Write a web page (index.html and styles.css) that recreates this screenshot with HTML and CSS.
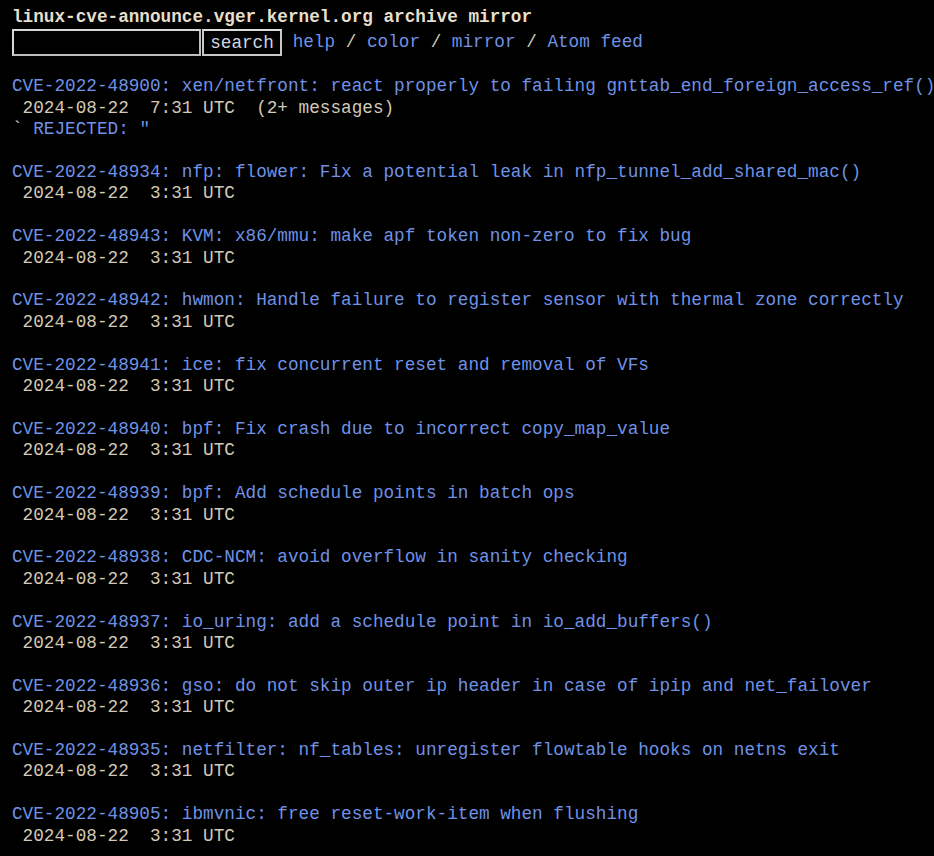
FILE: index.html
```html
<!DOCTYPE html>
<html>
<head>
<meta charset="utf-8">
<title>linux-cve-announce.vger.kernel.org archive mirror</title>
<link rel="stylesheet" href="styles.css">
</head>
<body>
<form class="top"><pre class="head"><a class="title" href="#"><b>linux-cve-announce.vger.kernel.org archive mirror</b></a>
<span class="row"><input class="q" name="q" type="text"><input class="btn" type="submit" value="search"> <a href="#">help</a> / <a href="#">color</a> / <a href="#">mirror</a> / <a href="#">Atom feed</a></span></pre></form>
<pre class="list"><a href="#">CVE-2022-48900: xen/netfront: react properly to failing gnttab_end_foreign_access_ref()</a>
 2024-08-22  7:31 UTC  (2+ messages)
` <a href="#">REJECTED: "</a>

<a href="#">CVE-2022-48934: nfp: flower: Fix a potential leak in nfp_tunnel_add_shared_mac()</a>
 2024-08-22  3:31 UTC

<a href="#">CVE-2022-48943: KVM: x86/mmu: make apf token non-zero to fix bug</a>
 2024-08-22  3:31 UTC

<a href="#">CVE-2022-48942: hwmon: Handle failure to register sensor with thermal zone correctly</a>
 2024-08-22  3:31 UTC

<a href="#">CVE-2022-48941: ice: fix concurrent reset and removal of VFs</a>
 2024-08-22  3:31 UTC

<a href="#">CVE-2022-48940: bpf: Fix crash due to incorrect copy_map_value</a>
 2024-08-22  3:31 UTC

<a href="#">CVE-2022-48939: bpf: Add schedule points in batch ops</a>
 2024-08-22  3:31 UTC

<a href="#">CVE-2022-48938: CDC-NCM: avoid overflow in sanity checking</a>
 2024-08-22  3:31 UTC

<a href="#">CVE-2022-48937: io_uring: add a schedule point in io_add_buffers()</a>
 2024-08-22  3:31 UTC

<a href="#">CVE-2022-48936: gso: do not skip outer ip header in case of ipip and net_failover</a>
 2024-08-22  3:31 UTC

<a href="#">CVE-2022-48935: netfilter: nf_tables: unregister flowtable hooks on netns exit</a>
 2024-08-22  3:31 UTC

<a href="#">CVE-2022-48905: ibmvnic: free reset-work-item when flushing</a>
 2024-08-22  3:31 UTC
</pre>
</body>
</html>
```

FILE: styles.css
```css
html, body {
  background: #000;
}
body {
  margin: 0;
  padding: 7px 12px;
  color: #d2cab6;
  font-family: "Liberation Mono", monospace;
  font-size: 17.7px;
  overflow: hidden;
}
pre {
  font-family: "Liberation Mono", monospace;
  font-size: 17.7px;
  line-height: 21.4px;
  margin: 0;
  white-space: pre;
}
a {
  color: #6f92e6;
  text-decoration: none;
}
.title {
  color: #e6dfcc;
}
.title b {
  font-weight: bold;
}
.top {
  margin: 0;
}
.head {
  margin-bottom: 20px;
}
.row {
  display: inline-block;
  margin-top: 1px;
}
.q {
  box-sizing: border-box;
  width: 189px;
  height: 27px;
  margin: 0;
  padding: 0 4px;
  background: #000;
  color: #d2cab6;
  border: 2px solid #d8d8d8;
  border-right-color: #bdbdbd;
  border-bottom-color: #bdbdbd;
  vertical-align: middle;
  font-family: "Liberation Mono", monospace;
  font-size: 17.7px;
}
.btn {
  box-sizing: border-box;
  width: 80px;
  height: 27px;
  margin: 0 0 0 1px;
  padding: 0 4px;
  background: #000;
  color: #cfd6e0;
  border: 2px solid #c8c8c8;
  border-top-color: #dcdcdc;
  vertical-align: middle;
  font-family: "Liberation Mono", monospace;
  font-size: 17.7px;
}
```
